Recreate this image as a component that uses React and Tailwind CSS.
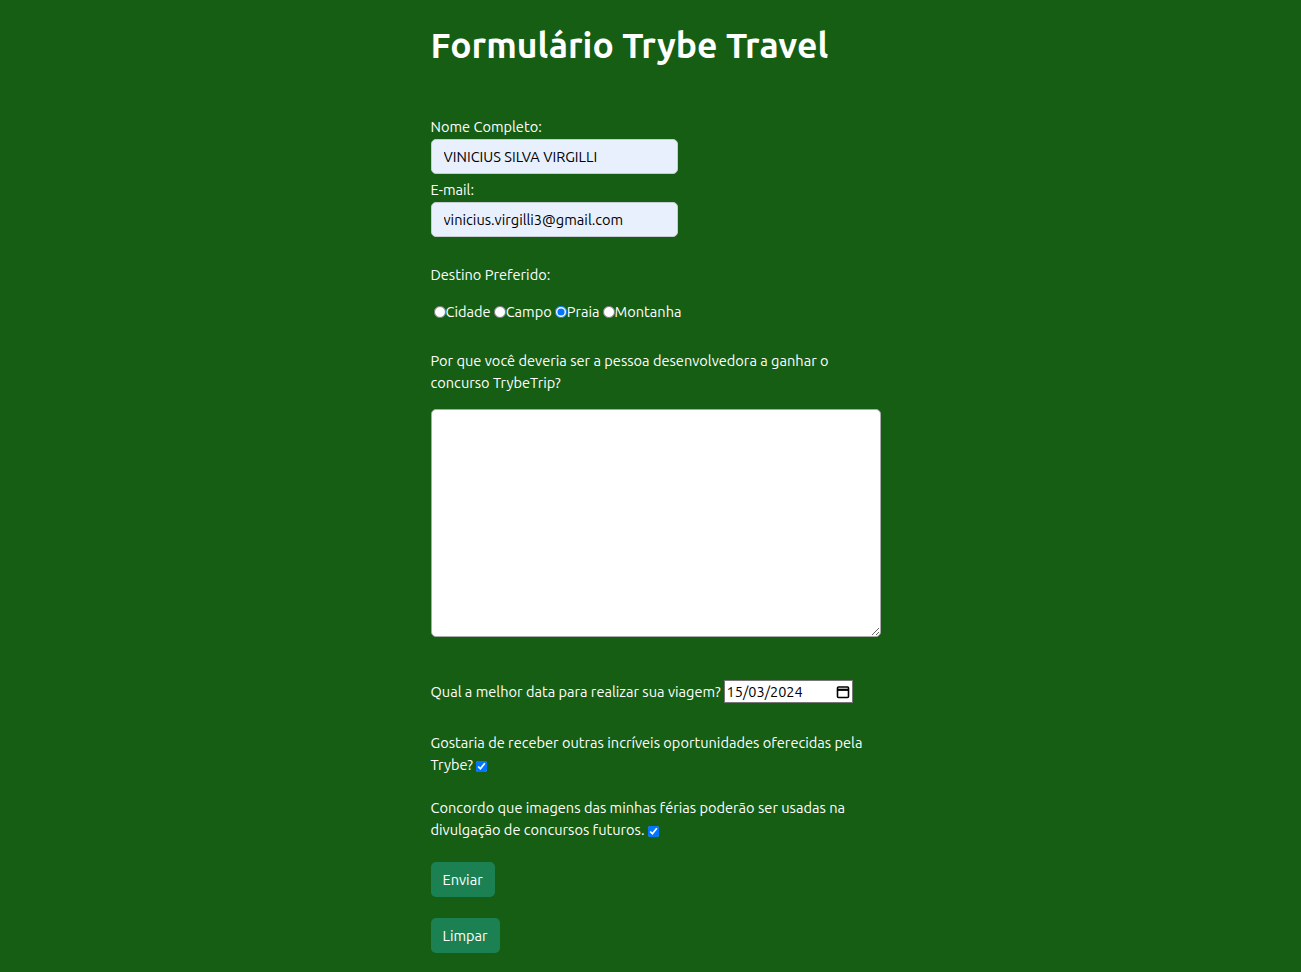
import { useState } from "react";

const CalendarIcon = () => (
  <svg width="14" height="14" viewBox="0 0 14 14" fill="none" stroke="#000" strokeWidth="1.6">
    <rect x="1.5" y="2" width="11" height="10.5" rx="1" />
    <path d="M1.5 4.8h11" strokeWidth="2.2" />
  </svg>
);

const App = () => {
  const [destino, setDestino] = useState("praia");
  return (
    <div
      className="min-h-[972px] bg-[#155e14] text-white"
      style={{ fontFamily: "Ubuntu, 'Noto Sans', sans-serif" }}
    >
      <form className="mx-auto flex w-[460px] flex-col pb-4 pl-[10px] text-[14.6px] leading-[22px]">
        <h1 className="mt-[23px] text-[35.5px] font-bold leading-[44px]">Formulário Trybe Travel</h1>

        <label className="mt-[49px]">Nome Completo:</label>
        <input
          className="mt-px h-[35px] w-[247px] rounded-[5px] border border-[#c7ccd4] bg-[#e8f0fe] px-3 text-black"
          defaultValue="VINICIUS SILVA VIRGILLI"
        />
        <label className="mt-[5px]">E-mail:</label>
        <input
          className="mt-px h-[35px] w-[247px] rounded-[5px] border border-[#c7ccd4] bg-[#e8f0fe] px-3 text-black"
          defaultValue="vinicius.virgilli3@gmail.com"
        />

        <p className="mt-[27px]">Destino Preferido:</p>
        <div className="mt-[15px] flex items-center">
          {["Cidade", "Campo", "Praia", "Montanha"].map((d) => (
            <label key={d} className="flex items-center">
              <input
                type="radio"
                name="destino"
                className="ml-[3px] h-[12px] w-[12px]"
                checked={destino === d.toLowerCase()}
                onChange={() => setDestino(d.toLowerCase())}
              />
              {d}
            </label>
          ))}
        </div>

        <p className="mt-[27px] w-[410px]">
          Por que você deveria ser a pessoa desenvolvedora a ganhar o concurso TrybeTrip?
        </p>
        <textarea className="mt-[15px] h-[228px] w-[450px] rounded-[5px] border border-[#aaa] bg-white text-black" />

        <div className="mt-[43px] flex items-center">
          <span>Qual a melhor data para realizar sua viagem?</span>
          <div className="ml-[3px] flex h-[23px] w-[129px] items-center justify-between border border-[#777] bg-white pl-[2px] pr-[2px] text-[14.5px] text-black">
            <input type="text" defaultValue="15/03/2024" className="w-[90px] bg-transparent outline-none" />
            <CalendarIcon />
          </div>
        </div>

        <p className="mt-[29px]">
          Gostaria de receber outras incríveis oportunidades oferecidas pela Trybe?{" "}
          <input type="checkbox" defaultChecked className="h-[11px] w-[11px] align-middle" />
        </p>
        <p className="mt-[21px]">
          Concordo que imagens das minhas férias poderão ser usadas na divulgação de concursos futuros.{" "}
          <input type="checkbox" defaultChecked className="h-[11px] w-[11px] align-middle" />
        </p>

        <div className="mt-[21px]">
          <button type="button" className="h-[35px] rounded-[5px] bg-[#1b8153] px-3 text-white">
            Enviar
          </button>
        </div>
        <div className="mt-[21px]">
          <button type="button" className="h-[35px] rounded-[5px] bg-[#1b8153] px-3 text-white">
            Limpar
          </button>
        </div>
      </form>
    </div>
  );
};

export default App;
